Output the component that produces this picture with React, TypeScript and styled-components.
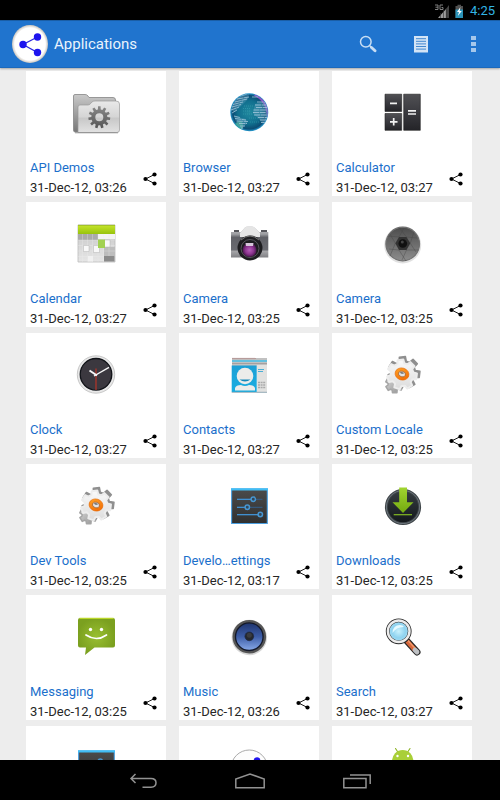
import React from "react";
import styled, { createGlobalStyle } from "styled-components";

const GlobalStyle = createGlobalStyle`
  * { box-sizing: border-box; }
  body { margin: 0; background: #ededed; font-family: Roboto, "Noto Sans", sans-serif; }
  button { border: 0; padding: 0; background: none; font: inherit; color: inherit; cursor: pointer; }
  svg { display: block; }
`;

const Screen = styled.div`
  display: flex;
  flex-direction: column;
  height: 100vh;
  background: #ededed;
`;

const StatusBar = styled.div`
  display: flex;
  flex: none;
  align-items: center;
  justify-content: flex-end;
  gap: 6px;
  height: 20px;
  padding: 2px 5px 0 0;
  background: #000;
  color: #33b5e5;
  font-size: 13px;
  line-height: 18px;
`;

const ActionBar = styled.header`
  display: flex;
  flex: none;
  align-items: center;
  height: 48px;
  padding-left: 12px;
  background: #2074ce;
  border-top: 1px solid #1a5ea6;
  border-bottom: 1px solid #1b69bd;
  box-shadow: 0 1px 2px rgba(0, 0, 0, 0.3);
  z-index: 1;
`;

const Title = styled.h1`
  flex: 1;
  margin: 0 0 0 6px;
  color: #eaf3fc;
  font-size: 15px;
  font-weight: 400;
  line-height: 20px;
`;

const ActionButton = styled.button`
  display: flex;
  align-items: center;
  justify-content: center;
  width: 53px;
  height: 46px;
`;

const Content = styled.main`
  flex: 1;
  min-height: 0;
  overflow-y: auto;
  scrollbar-width: none;
`;

const Grid = styled.ul`
  display: grid;
  grid-template-columns: repeat(3, 1fr);
  gap: 6px 13px;
  margin: 0;
  padding: 3px 28px 0 26px;
  list-style: none;
`;

const Card = styled.li`
  display: flex;
  flex-direction: column;
  min-height: 125px;
  padding: 18px 4px 0;
  background: #fff;
`;

const Artwork = styled.div`
  display: flex;
  justify-content: center;
  height: 70px;
`;

const Caption = styled.div`
  display: flex;
  align-items: flex-start;
`;

const Labels = styled.div`
  flex: 1;
  min-width: 0;
  white-space: nowrap;
`;

const AppName = styled.h2`
  margin: 0;
  color: #1b6fcb;
  font-size: 13px;
  font-weight: 400;
  line-height: 18px;
`;

const AppDate = styled.div`
  margin-top: 2px;
  color: #262626;
  font-size: 13px;
  line-height: 17px;
`;

const ShareButton = styled.button`
  display: flex;
  align-items: center;
  justify-content: center;
  width: 16px;
  height: 28px;
  margin: 6px 4px 0 0;
`;

const NavBar = styled.nav`
  display: flex;
  flex: none;
  justify-content: center;
  height: 40px;
  background: #000;
`;

const NavButton = styled.button`
  display: flex;
  align-items: center;
  justify-content: center;
  width: 107px;
  height: 42px;
`;

function gearPath(cx: number, cy: number, outer: number, inner: number, teeth: number, turn = 0, width = 0.25) {
  const pts: string[] = [];
  const step = (Math.PI * 2) / teeth;
  for (let i = 0; i < teeth; i++) {
    const a = i * step + turn;
    const corners: [number, number][] = [
      [inner, -width * 1.25],
      [outer, -width * 0.8],
      [outer, width * 0.8],
      [inner, width * 1.25],
    ];
    corners.forEach(([r, d]) => {
      const t = a + d * step;
      pts.push(`${(cx + r * Math.cos(t)).toFixed(2)} ${(cy + r * Math.sin(t)).toFixed(2)}`);
    });
  }
  return `M${pts.join("L")}Z`;
}

type Stop = [string, string];
const Ramp = ({ id, stops, across }: { id: string; stops: Stop[]; across?: boolean }) => (
  <linearGradient id={id} x1="0" y1="0" x2={across ? "1" : "0"} y2="1">
    {stops.map(([o, c]) => <stop key={o} offset={o} stopColor={c} />)}
  </linearGradient>
);
const Glow = ({ id, stops }: { id: string; stops: Stop[] }) => (
  <radialGradient id={id}>
    {stops.map(([o, c]) => <stop key={o} offset={o} stopColor={c} />)}
  </radialGradient>
);

const Art = ({ children }: { children: React.ReactNode }) => (
  <svg width="48" height="48" viewBox="0 0 48 48" aria-hidden="true">{children}</svg>
);

const Folder = () => (
  <Art>
    <defs>
      <Ramp id="fBack" stops={[["0", "#c9c9c9"], ["1", "#777"]]} />
      <Ramp id="fFront" stops={[["0", "#e9e9e9"], [".5", "#d5d5d5"], [".55", "#c8c8c8"], ["1", "#e2e2e2"]]} />
      <Ramp id="fGear" stops={[["0", "#898989"], ["1", "#555"]]} />
    </defs>
    <path d="M1.500 7Q1.500 5.500 3 5.500H13Q15 5.500 16 7L17 8.500H41Q43.500 8.500 43.500 11V43H3Q1.500 43 1.500 41Z" fill="url(#fBack)" stroke="#858585" strokeWidth=".8" />
    <path d="M6 18Q6 16 8 16H16Q18 16 19 14L20 13Q21 12 23 12H44Q47.500 12 47.500 15V41Q47.500 43.500 45 43.500H6Z" fill="url(#fFront)" stroke="#999" strokeWidth=".7" />
    <path d="M3 43.800H46" stroke="#888" strokeWidth=".8" />
    <path d={gearPath(27.3, 28.3, 11, 8, 11, -1.57) + "M31.300 28.300a4 4 0 1 0-8 0a4 4 0 1 0 8 0Z"} fillRule="evenodd" fill="url(#fGear)" />
  </Art>
);

const Globe = () => (
  <Art>
    <defs>
      <Glow id="gSea" stops={[["0", "#22899f"], [".6", "#12708f"], [".88", "#0d4e75"], ["1", "#2b9ad0"]]} />
      <clipPath id="gClip"><circle cx="24.300" cy="23.300" r="18.500" /></clipPath>
    </defs>
    <circle cx="24.300" cy="23.300" r="19" fill="url(#gSea)" />
    <g clipPath="url(#gClip)">
      <path d="M8 36Q24 48 42 35L38 46H10Z" fill="#24abdf" opacity=".8" />
      <path d="M30 5Q43 11 44 28" stroke="#9b55cf" strokeWidth="4" fill="none" opacity=".85" />
      <path d="M10 35Q18 28 18 38L16 42Z" fill="#3eba94" opacity=".7" />
      <path d="M14 7L24 5L23 10L16 17L9 23L6 21L9 12ZM9 27L21 30L22 34L17 40L12 36ZM30 15L42 12L44 28L38 34L28 24Z" fill="#6fa9c4" opacity=".35" />
      <g stroke="#a9cbe0" strokeWidth=".9" opacity=".85" fill="none" strokeDasharray="6 .6">
        <path d="M15 7L22 5M12 10L24 8M10 13L22 10M8 15.500L18 13M7 18L16 15.500M6 21L14 18M7 24L12 21M27 8L34 8" />
        <path d="M32 13H40M30 16H42M31 18.500H43M28.500 21H42M28 23.500H41M29 26H43M33 28.500H42M35 31H42M36 33.500H40" />
        <path d="M9 27L15 28.500M10 29.500L21 31M12 32L23 32.500M14 34.500L22 34.500M15 37L20 37M16 39H18" />
      </g>
      <path d="M19 17H28M18 19.500H26M18 22H26M18 25H27M24 29H33M25 33H34" stroke="#49b4c1" strokeWidth=".6" strokeDasharray=".7 1.300" />
    </g>
  </Art>
);

const Calculator = () => (
  <Art>
    <defs><Ramp id="cTile" stops={[["0", "#505054"], [".5", "#3a3a3f"], ["1", "#242428"]]} /></defs>
    <g fill="url(#cTile)" stroke="#222" strokeWidth=".6">
      <path d="M7 5.200H23.700V22.500H7Z" /><path d="M7 24.500H23.700V41.300H7Z" />
      <path d="M25.700 5.200H42.300V41.300H25.700Z" />
    </g>
    <path d="M12 14.300H19M12 32.800H19.500M15.700 29V36.500M30 21.800H38M30 25H38" stroke="#f1f1f1" strokeWidth="1.700" />
  </Art>
);

const Calendar = () => (
  <Art>
    <defs>
      <Ramp id="calTop" stops={[["0", "#c6e52b"], ["1", "#98c30d"]]} />
      <Ramp id="calPage" stops={[["0", "#c4c4c4"], ["1", "#e6e6e6"]]} />
    </defs>
    <path d="M6 5H43V42H6Z" fill="url(#calPage)" stroke="#bbb" strokeWidth=".8" />
    <path d="M6 14H26V20H6Z" fill="#aaa" />
    <path d="M26 14H43V19H26Z" fill="#f4f4f4" />
    <path d="M32 27H43V36H32Z" fill="#bdbdbd" />
    <path d="M10.500 14V42M15.500 14V42M20.500 14V42M26 14V42M31.500 14V42M37 14V42M6 20H43M6 25.500H43M6 31H43M6 36.500H43" stroke="#efefef" strokeWidth=".5" opacity=".6" />
    <path d="M32 36H42.500V41.500H32Z" fill="#8b8b8b" />
    <path d="M16 36H21V41.500H16Z" fill="#f1f1f1" />
    <path d="M11.500 25.500H17V31.500H11.500ZM21.500 25.500H27.500V32.500H21.500ZM32.500 20H38V27H32.500Z" fill="#f8f8f8" stroke="#aaa" strokeWidth=".4" />
    <path d="M26 19.500H33V28H26Z" fill="#a2d152" />
    <path d="M6 5H43V14H6Z" fill="url(#calTop)" /><path d="M6 5.300H43" stroke="#8da926" strokeWidth=".7" />
  </Art>
);

const Camera = () => (
  <Art>
    <defs>
      <Ramp id="camBody" stops={[["0", "#c3c3c5"], [".25", "#9c9da1"], [".35", "#606167"], [".75", "#6a6b71"], [".8", "#a4a4a7"], ["1", "#808084"]]} />
      <Glow id="camLens" stops={[["0", "#b660ba"], [".6", "#8c348f"], ["1", "#4a174e"]]} />
    </defs>
    <path d="M9 10H14V12H9ZM36 10H42V12H36Z" fill="#55555a" />
    <path d="M6 12H16L20 7.500Q21 6.500 23 6.500H27Q29 6.500 30 8L34 12H43.300V37.500H6Z" fill="url(#camBody)" />
    <path d="M15 13L20 7.500Q21 6.500 23 6.500H27Q29 6.500 30 8L35 13V17H15Z" fill="#e5e5e5" />
    <circle cx="25" cy="28" r="12.500" fill="#1d1d20" />
    <path d="M16 20Q25 12 34 20" stroke="#777" fill="none" /><circle cx="25" cy="28.500" r="9" fill="none" stroke="#56565b" />
    <circle cx="24.500" cy="30" r="7" fill="url(#camLens)" />
    <path d="M20.500 23H28.500L28 26H21Z" fill="#d7c7db" />
  </Art>
);

const Aperture = () => (
  <Art>
    <defs><Ramp id="apFill" stops={[["0", "#4c4c4c"], ["1", "#8c8c8c"]]} /></defs>
    <circle cx="24.700" cy="25" r="18.500" fill="#ccc" opacity=".6" />
    <circle cx="24.700" cy="24" r="16.800" fill="url(#apFill)" stroke="#707070" strokeWidth="1.200" />
    <path d="M21.500 8L28.500 17L39 18M36 11.500L32.300 23.300L38 32M40 30L28.500 30L24 40M28 41L21 30L11 29M12 36L17.300 23.300L12 14M10 16L21 17L26 8" stroke="#454545" strokeWidth=".5" fill="none" opacity=".8" />
    <path d="M21 17H28.500L32.300 23.300L28.500 30H21L17.300 23.300Z" fill="#333" />
    <circle cx="24.800" cy="23.500" r="4.300" fill="#111" /><circle cx="24.300" cy="22" r="1.500" fill="#444" />
  </Art>
);

const Clock = () => (
  <Art>
    <circle cx="24" cy="23.500" r="18.700" fill="#e8e8e8" stroke="#bdbdbd" strokeWidth=".8" />
    <circle cx="24" cy="23.300" r="15.800" fill="#3b383f" stroke="#111318" strokeWidth="1.300" />
    <path d="M24 17.500V39" stroke="#b73527" strokeWidth="1.200" />
    <path d="M17.500 19.500L25 24.500" stroke="#f7f7f7" strokeWidth="2" /><path d="M22 25L37 16.300" stroke="#f7f7f7" strokeWidth="1.400" />
  </Art>
);

const Contacts = () => (
  <Art>
    <defs><Ramp id="conBlue" stops={[["0", "#1d9fd5"], ["1", "#19aee2"]]} /></defs>
    <path d="M7 7H42V15H7Z" fill="#c1c1c1" /><path d="M7 7.500H31" stroke="#b79c9b" strokeWidth="1.200" /><path d="M7 10H42" stroke="#43bfe8" strokeWidth="1.500" /><path d="M7 12.500H42" stroke="#a5a0a0" />
    <path d="M31.500 14H42V41.500H31.500Z" fill="#e2e2e0" />
    <path d="M6.700 14.500H31.700V41H6.700Z" fill="url(#conBlue)" />
    <path d="M33 18.500H39M33 20.500H38" stroke="#4aafd6" strokeWidth="1.100" />
    <path d="M33 31.500H40.500M33 34H40.500M33 36.500H40.500" stroke="#aaa" strokeWidth="1.400" strokeDasharray="2 .6" />
    <circle cx="20" cy="25" r="8.300" fill="#ececea" />
    <path d="M14.500 28.500H25.500Q23 30.500 20 30.500T14.500 28.500Z" fill="#1688b9" />
    <path d="M10 39.500V37Q11 34 16 34Q20 36 24 34Q29 34 30 37V39.500Z" fill="#ececea" />
    <path d="M6.700 41.300H42" stroke="#7e9aa8" strokeWidth=".8" />
  </Art>
);

const Gears = ({ id }: { id: string }) => (
  <Art>
    <defs>
      <Ramp id={id + "a"} stops={[["0", "#fafafa"], ["1", "#dcdcdc"]]} />
      <Ramp id={id + "b"} across stops={[["0", "#ddd"], ["1", "#8f8f8f"]]} />
      <Ramp id={id + "c"} across stops={[["0", "#ffa628"], ["1", "#f06400"]]} />
    </defs>
    <path d={gearPath(16.5, 33, 9, 6.5, 6, 0.5, 0.3)} fill={`url(#${id}b)`} stroke="#a5a5a5" strokeWidth="1.500" strokeLinejoin="round" />
    <path d={gearPath(26, 21.5, 16, 11.5, 7, 0.12, 0.27)} fill="#8f8f8f" stroke="#8f8f8f" strokeWidth="1.500" strokeLinejoin="round" />
    <path d={gearPath(24, 23.5, 15, 11.5, 7, 0.12, 0.27)} fill={`url(#${id}a)`} stroke="#ededed" strokeWidth="2" strokeLinejoin="round" />
    <g transform="rotate(18 24 23)">
      <ellipse cx="24" cy="23" rx="7" ry="6" fill={`url(#${id}c)`} stroke="#e66b08" strokeWidth=".6" />
      <ellipse cx="24" cy="23" rx="3.600" ry="2.800" fill="#e3e3e3" stroke="#9e5b25" strokeWidth=".7" />
      <path d="M21 22.500Q23 20.500 26 21.500L24 23Z" fill="#777" />
    </g>
  </Art>
);

const Sliders = ({ id }: { id: string }) => (
  <Art>
    <defs><Ramp id={id} stops={[["0", "#4b4b4b"], ["1", "#303030"]]} /></defs>
    <path d="M6.600 7H42.300V41.500H6.600Z" fill={`url(#${id})`} stroke="#4c9fe0" strokeWidth="1.100" />
    <path d="M6 7.400H43" stroke="#41bdf5" strokeWidth="2.400" />
    <path d="M12 17.300H37.500M12 25.300H37.500M12 32.700H37.500" stroke="#35577a" strokeWidth="1.200" />
    <path d="M12 17.300H26M12 25.300H20M12 32.700H33" stroke="#408fd0" strokeWidth="1.200" />
    <g fill="#344657" stroke="#4796d1" strokeWidth="1.500">
      <circle cx="28.300" cy="17.300" r="2.200" /><circle cx="22.300" cy="25.300" r="2.200" /><circle cx="35.300" cy="32.500" r="2.200" />
    </g>
  </Art>
);

const Downloads = () => (
  <Art>
    <defs>
      <Ramp id="dlArrow" stops={[["0", "#a1d530"], ["1", "#73a910"]]} />
      <Ramp id="dlDisc" stops={[["0", "#363d42"], ["1", "#12171b"]]} />
    </defs>
    <circle cx="25" cy="25" r="16.600" fill="url(#dlDisc)" stroke="#3e4448" strokeWidth="3" />
    <circle cx="25" cy="25" r="16.600" fill="none" stroke="#79838a" strokeWidth=".8" />
    <path d="M21.200 5.500H29V20.300H35.500L25 31L14.500 20.300H21.200Z" fill="url(#dlArrow)" />
    <path d="M15.700 32.700H34" stroke="#83b923" strokeWidth="1.200" />
  </Art>
);

const Messaging = () => (
  <Art>
    <defs><Glow id="msg" stops={[["0", "#99bf31"], ["1", "#7ba01f"]]} /></defs>
    <path d="M8 5H41Q43 5 43 7V32.500Q43 34.500 41 34.500H22.500L13 42L14 34.500H8Q6 34.500 6 32.500V7Q6 5 8 5Z" fill="url(#msg)" />
    <path d="M7.500 5.400H41.500" stroke="#bad729" strokeWidth="1.100" />
    <path d="M14 22Q24.500 29 34.500 22" stroke="#fff" strokeWidth="1.700" strokeLinecap="round" fill="none" />
    <circle cx="18.500" cy="16.500" r="1.700" fill="#fff" /><circle cx="29.500" cy="16.500" r="1.700" fill="#fff" />
  </Art>
);

const Speaker = () => (
  <Art>
    <defs><Ramp id="spk" stops={[["0", "#1b3068"], [".5", "#3d5da7"], ["1", "#91b2ef"]]} /></defs>
    <circle cx="24.300" cy="24.500" r="17.700" fill="#bbb" opacity=".6" />
    <circle cx="24.300" cy="23.700" r="15.300" fill="url(#spk)" stroke="#555" strokeWidth="3" />
    <circle cx="24.300" cy="23.700" r="13.800" fill="none" stroke="#14192a" strokeWidth="1.300" />
    <circle cx="24.300" cy="23.300" r="4.400" fill="#25282e" stroke="#1b2748" strokeWidth=".6" />
    <circle cx="24.300" cy="22.300" r="2.500" fill="#3a3c40" />
  </Art>
);

const Magnifier = () => (
  <Art>
    <defs><Glow id="mag" stops={[["0", "#c9f1fc"], [".6", "#8fd3f0"], ["1", "#a8dff5"]]} /></defs>
    <path d="M28 27L39 39" stroke="#262626" strokeWidth="7" strokeLinecap="round" />
    <path d="M29 28L36.500 36.500" stroke="#d7673b" strokeWidth="4.500" /><path d="M30 27.500L37.500 36" stroke="#f29a6b" strokeWidth="1.200" />
    <path d="M37 37L39 39" stroke="#bfc1c4" strokeWidth="4.800" strokeLinecap="round" />
    <circle cx="20.700" cy="18.300" r="11" fill="url(#mag)" stroke="#262626" strokeWidth="3.800" />
    <circle cx="20.700" cy="18.300" r="10.800" fill="none" stroke="#ececec" strokeWidth="2.500" />
    <path d="M14.500 20Q15 12 22 12Q25 12 26 14Q18 14 14.500 20Z" fill="#e6faff" />
  </Art>
);

const ShareDisc = () => (
  <Art>
    <circle cx="24.300" cy="24.300" r="18.300" fill="#fdfdfd" stroke="#aaa" />
    <path d="M32 16L16 24.300L32 32" stroke="#2b20df" fill="none" strokeWidth="1.500" />
    <g fill="#2014ed"><circle cx="32" cy="16.500" r="3.300" /><circle cx="16" cy="24.300" r="3.300" /><circle cx="32" cy="32" r="3.300" /></g>
  </Art>
);

const Robot = () => (
  <Art>
    <path d="M17.500 4.500L20.500 9M32 4.500L29 9" stroke="#8ab222" strokeWidth="1.100" strokeLinecap="round" />
    <path d="M14 17A10.700 11 0 0 1 35.400 17Z" fill="#a9cf38" />
    <circle cx="19.500" cy="12" r="1.200" fill="#fff" /><circle cx="30" cy="12" r="1.200" fill="#fff" />
    <path d="M14 18H35.400V35H14Z" fill="#a0c735" />
  </Art>
);

const ShareGlyph = () => (
  <svg width="14" height="14" viewBox="0 0 14 14" aria-hidden="true">
    <path d="M11.500 2.500L2.500 7L11.500 11.500" fill="none" stroke="#000" strokeWidth=".9" />
    <circle cx="11.500" cy="2.500" r="2.100" /><circle cx="2.500" cy="7" r="2.100" /><circle cx="11.500" cy="11.500" r="2.100" />
  </svg>
);

const Logo = () => (
  <svg width="36" height="38" viewBox="0 0 36 38" aria-hidden="true">
    <defs><Glow id="logo" stops={[["0", "#fff"], [".85", "#fff"], ["1", "#c9c4bd"]]} /></defs>
    <ellipse cx="18" cy="19" rx="18" ry="19" fill="url(#logo)" />
    <path d="M25.500 12L11 19.500L25.500 27.500" fill="none" stroke="#2a27dc" strokeWidth="1.300" />
    <g fill="#1d14ee"><circle cx="25.500" cy="12" r="3.700" /><circle cx="11" cy="19.500" r="3.700" /><circle cx="25.500" cy="27.500" r="3.700" /></g>
  </svg>
);

type App = { name?: string; date?: string; art: React.ReactNode };

const apps: App[] = [
  { name: "API Demos", date: "31-Dec-12, 03:26", art: <Folder /> },
  { name: "Browser", date: "31-Dec-12, 03:27", art: <Globe /> },
  { name: "Calculator", date: "31-Dec-12, 03:27", art: <Calculator /> },
  { name: "Calendar", date: "31-Dec-12, 03:27", art: <Calendar /> },
  { name: "Camera", date: "31-Dec-12, 03:25", art: <Camera /> },
  { name: "Camera", date: "31-Dec-12, 03:25", art: <Aperture /> },
  { name: "Clock", date: "31-Dec-12, 03:27", art: <Clock /> },
  { name: "Contacts", date: "31-Dec-12, 03:27", art: <Contacts /> },
  { name: "Custom Locale", date: "31-Dec-12, 03:25", art: <Gears id="locale" /> },
  { name: "Dev Tools", date: "31-Dec-12, 03:25", art: <Gears id="tools" /> },
  { name: "Develo…ettings", date: "31-Dec-12, 03:17", art: <Sliders id="dev" /> },
  { name: "Downloads", date: "31-Dec-12, 03:25", art: <Downloads /> },
  { name: "Messaging", date: "31-Dec-12, 03:25", art: <Messaging /> },
  { name: "Music", date: "31-Dec-12, 03:26", art: <Speaker /> },
  { name: "Search", date: "31-Dec-12, 03:27", art: <Magnifier /> },
  { art: <Sliders id="set" /> },
  { art: <ShareDisc /> },
  { art: <Robot /> },
];

export default function App() {
  return (
    <Screen>
      <GlobalStyle />
      <StatusBar>
        <svg width="30" height="15" viewBox="0 0 30 15" aria-hidden="true">
          <path d="M1 1H4V5.500H1M1.500 3.200H4M9 1H6V5.500H9V3.500H7.500" fill="none" stroke="#8d8d8d" strokeWidth=".9" />
          <path d="M4 14L12 5V14Z" fill="#9b9b9b" /><path d="M12 5L15 1V14H12Z" fill="#444" />
          <path d="M6.500 9V14M9.500 6V14M12.300 4V14" stroke="#333" strokeWidth=".6" />
          <path d="M21.500 2H23.500V.8H27V2H29V14H21.500Z" fill="#505050" /><path d="M21.500 5.500H29V14H21.500Z" fill="#2b93b8" />
          <path d="M26.500 3L23 8H25L23.800 12L27.800 7H25.600Z" fill="#fff" />
        </svg>
        <time>4:25</time>
      </StatusBar>
      <ActionBar>
        <Logo />
        <Title>Applications</Title>
        <ActionButton aria-label="Search">
          <svg width="18" height="18" viewBox="0 0 18 18" fill="none" stroke="#c8def4" aria-hidden="true">
            <circle cx="6.800" cy="6.800" r="5.300" strokeWidth="1.500" /><path d="M10.800 10.800L12.500 12.500" strokeWidth="1.500" />
            <path d="M12.500 12.500L16 15.800" strokeWidth="2.900" strokeLinecap="round" />
          </svg>
        </ActionButton>
        <ActionButton aria-label="List">
          <svg width="14" height="18" viewBox="0 0 14 18" aria-hidden="true">
            <path d="M0 1H14V17.500H0Z" fill="#d3e4f6" />
            <path d="M2 3.700H12M2 6.300H12M2 8.900H12M2 11.500H12M2 14.100H12" stroke="#4288d0" />
          </svg>
        </ActionButton>
        <ActionButton aria-label="More options">
          <svg width="5" height="18" viewBox="0 0 5 18" fill="#a5c7eb" aria-hidden="true">
            <path d="M0 1H5V5H0ZM0 7H5V11H0ZM0 13H5V17H0Z" />
          </svg>
        </ActionButton>
      </ActionBar>
      <Content>
        <Grid>
          {apps.map((app, i) => (
            <Card key={i}>
              <Artwork>{app.art}</Artwork>
              {app.name && (
                <Caption>
                  <Labels>
                    <AppName>{app.name}</AppName>
                    <AppDate>{app.date}</AppDate>
                  </Labels>
                  <ShareButton aria-label={`Share ${app.name}`}><ShareGlyph /></ShareButton>
                </Caption>
              )}
            </Card>
          ))}
        </Grid>
      </Content>
      <NavBar aria-label="System">
        <NavButton aria-label="Back">
          <svg width="28" height="16" viewBox="0 0 28 16" fill="none" stroke="#929292" strokeWidth="1.500" aria-hidden="true">
            <path d="M6.500 1L2 5.500L6.500 10M2 5.500H22Q27 5.500 27 9.800T22 14.200H13.500" />
          </svg>
        </NavButton>
        <NavButton aria-label="Home">
          <svg width="30" height="16" viewBox="0 0 30 16" fill="none" stroke="#929292" strokeWidth="1.500" aria-hidden="true">
            <path d="M.8 14.700V6L15 1L29.200 6V14.700Z" />
          </svg>
        </NavButton>
        <NavButton aria-label="Recent apps">
          <svg width="28" height="16" viewBox="0 0 28 16" fill="none" stroke="#929292" strokeWidth="1.500" aria-hidden="true">
            <path d="M.8 5.500H23V14.700H.8ZM7 2H27.200V11" />
          </svg>
        </NavButton>
      </NavBar>
    </Screen>
  );
}
